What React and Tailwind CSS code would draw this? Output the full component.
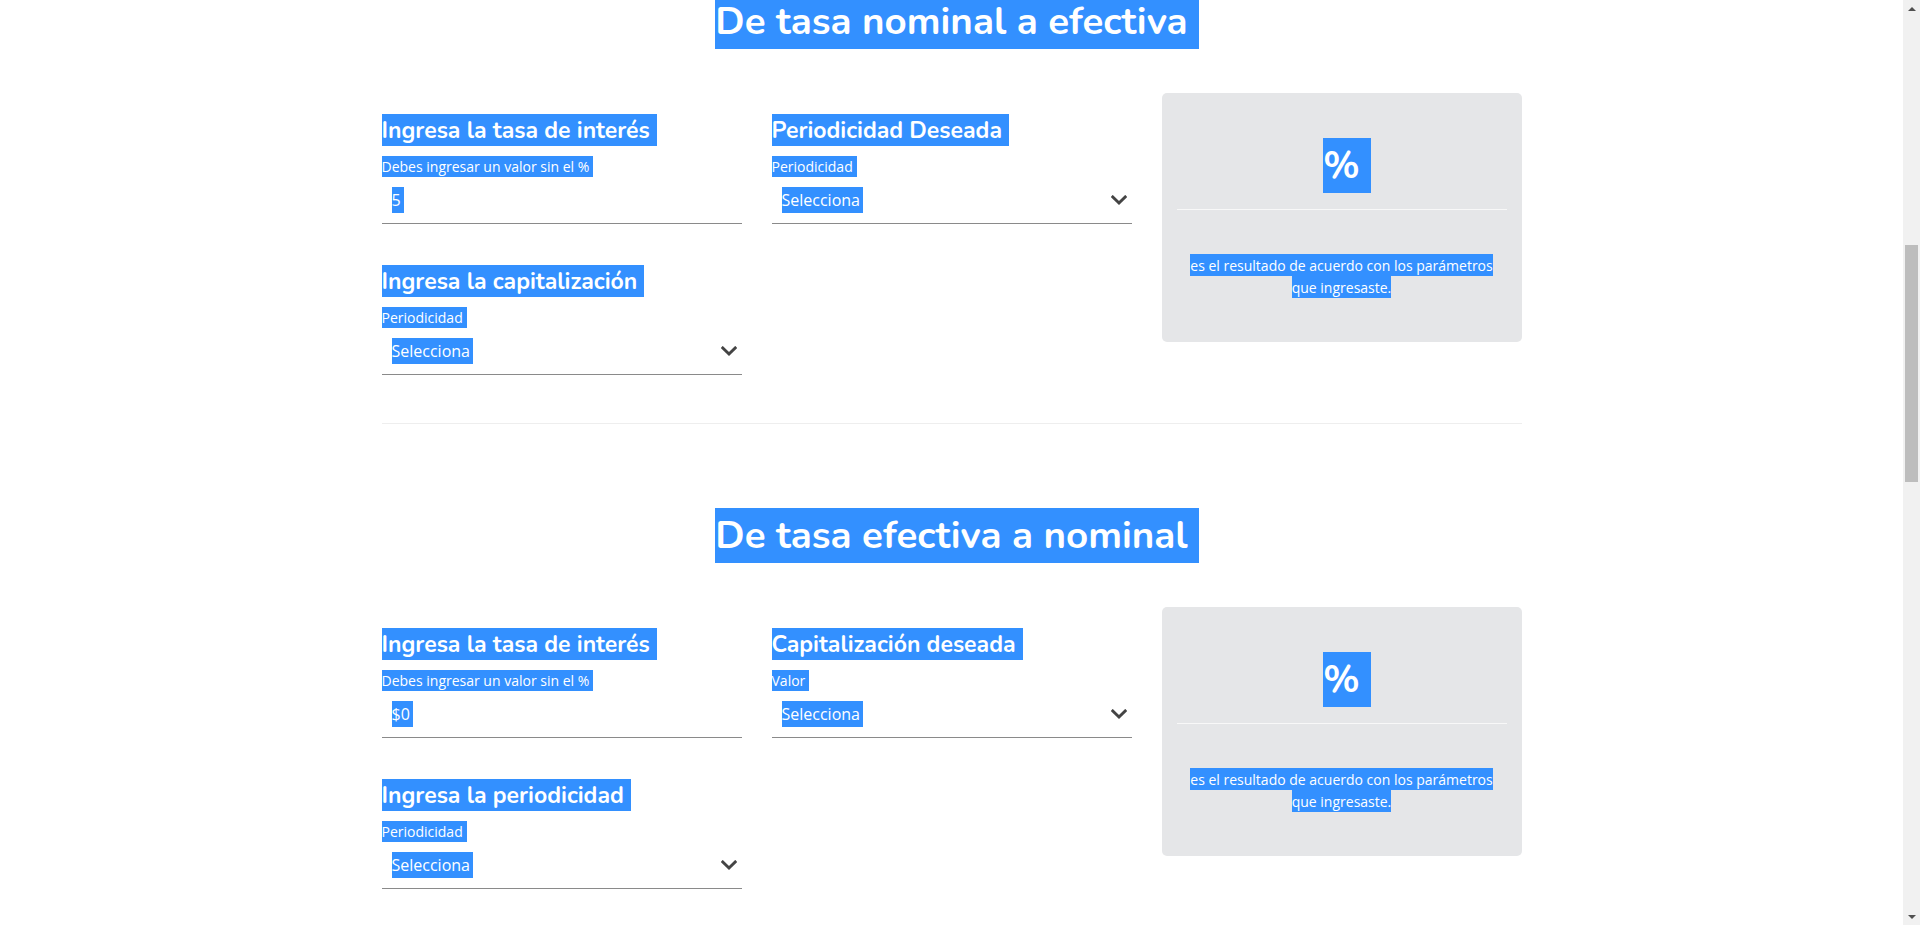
const headFont = "font-['Nunito','Lato','Open_Sans',sans-serif]";
const bodyFont = "font-['Open_Sans','Noto_Sans',sans-serif]";

const Sel = ({ children, className = '' }) => (
    <span className={`bg-[#3390ff] text-white ${className}`}>{children}</span>
);

const Chevron = () => (
    <svg width="16" height="11" viewBox="0 0 16 11" fill="none" className="shrink-0">
        <polyline points="1.8,2 8,8 14.2,2" stroke="#444" strokeWidth="3" strokeLinecap="square" />
    </svg>
);

const Field = ({ title, label, value, select }) => (
    <div className="flex flex-col">
        <h3 className={`${headFont} text-[23px] font-bold leading-[32px]`}>
            <Sel className="py-[0.5px] pr-[7px]">{title}</Sel>
        </h3>
        <label className={`${bodyFont} mt-[10px] text-[14px] leading-[22px]`}>
            <Sel className="py-[1px] pr-[4px]">{label}</Sel>
        </label>
        <div className={`${bodyFont} flex items-center justify-between border-b border-[#8a8a8a] pl-[10px] pr-[5px] pt-[9px] pb-[10px] text-[16px] leading-[24px]`}>
            <Sel className="py-[1px] pr-[3px]">{value}</Sel>
            {select && <Chevron />}
        </div>
    </div>
);

const ResultBox = () => (
    <div className="flex h-[249px] flex-col items-center rounded-[5px] bg-[#e5e6e8] pt-[46px]">
        <p className={`${headFont} text-[38.5px] font-bold leading-[54px]`}>
            <Sel className="-mr-[11px] py-[1px] pr-[11px]">%</Sel>
        </p>
        <div className="mt-[16px] h-px w-[330px] bg-[#f8f8f8]" />
        <p className={`${bodyFont} mt-[44px] px-[24px] text-center text-[14px] leading-[22px]`}>
            <Sel className="py-[1.5px]">es el resultado de acuerdo con los parámetros que ingresaste.</Sel>
        </p>
    </div>
);

const Section = ({ title, first, second, third }) => (
    <section className="flex flex-col">
        <h2 className={`${headFont} text-center text-[38.5px] font-bold leading-[54px]`}>
            <Sel className="-mr-[11px] py-[1px] pr-[11px]">{title}</Sel>
        </h2>
        <div className="mt-[44px] grid grid-cols-3 gap-x-[30px]">
            <div className="flex flex-col gap-[41px] pt-[21px]">
                <Field {...first} />
                <Field {...third} select />
            </div>
            <div className="pt-[21px]">
                <Field {...second} select />
            </div>
            <ResultBox />
        </div>
    </section>
);

const ScrollBar = () => (
    <div className="flex w-[17px] shrink-0 flex-col bg-[#f1f1f1]">
        <div className="flex h-[17px] items-center justify-center">
            <div className="h-0 w-0 border-x-[4px] border-b-[4px] border-x-transparent border-b-[#505050]" />
        </div>
        <div className="flex-1">
            <div className="mx-[2px] mt-[228px] h-[237px] bg-[#bdbdbd]" />
        </div>
        <div className="flex h-[17px] items-center justify-center">
            <div className="h-0 w-0 border-x-[4px] border-t-[4px] border-x-transparent border-t-[#505050]" />
        </div>
    </div>
);

export default function App() {
    return (
        <div className="flex h-[925px] w-full overflow-hidden bg-white text-[#212529]">
            <main className="flex-1 overflow-hidden">
                <div className="mx-auto -mt-[5px] w-[1140px]">
                    <Section
                        title="De tasa nominal a efectiva"
                        first={{ title: 'Ingresa la tasa de interés', label: 'Debes ingresar un valor sin el %', value: '5' }}
                        second={{ title: 'Periodicidad Deseada', label: 'Periodicidad', value: 'Selecciona' }}
                        third={{ title: 'Ingresa la capitalización', label: 'Periodicidad', value: 'Selecciona' }}
                    />
                    <hr className="mt-[48px] mb-[85px] border-t border-[#eeeeee]" />
                    <Section
                        title="De tasa efectiva a nominal"
                        first={{ title: 'Ingresa la tasa de interés', label: 'Debes ingresar un valor sin el %', value: '$0' }}
                        second={{ title: 'Capitalización deseada', label: 'Valor', value: 'Selecciona' }}
                        third={{ title: 'Ingresa la periodicidad', label: 'Periodicidad', value: 'Selecciona' }}
                    />
                </div>
            </main>
            <ScrollBar />
        </div>
    );
}
